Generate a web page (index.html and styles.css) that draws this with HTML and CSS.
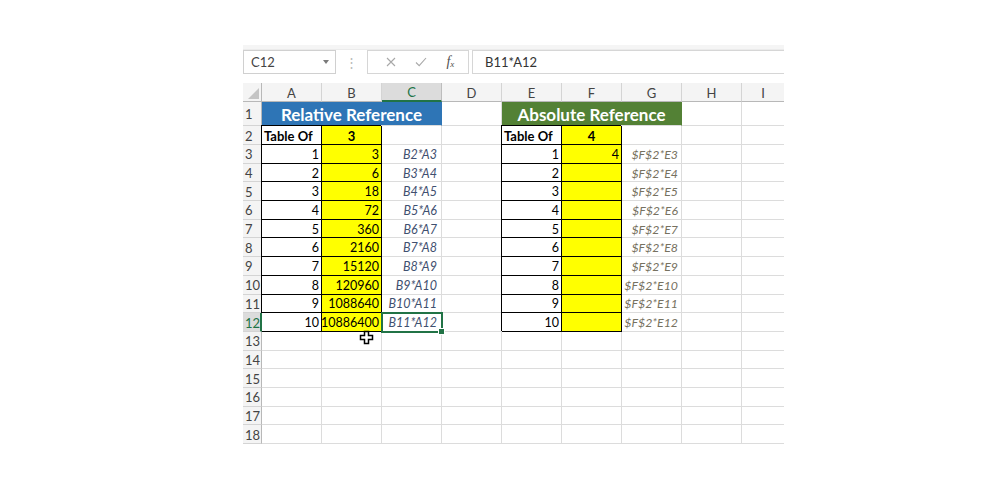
FILE: index.html
```html
<!DOCTYPE html>
<html>
<head>
<meta charset="utf-8">
<link rel="stylesheet" href="styles.css">
</head>
<body>
<div class="app">
  <div class="ribbon-edge"></div>
  <div class="fbar">
    <div class="namebox"><span>C12</span><span class="caret"></span></div>
    <div class="grip">⋮</div>
    <div class="fxbox">
      <svg class="ic" width="10" height="10" viewBox="0 0 10 10"><path d="M1 1L9 9M9 1L1 9" stroke="#a8a8a8" stroke-width="1.1" fill="none"/></svg>
      <svg class="ic" width="12" height="10" viewBox="0 0 12 10"><path d="M1 5.5L4.2 8.6L11 1" stroke="#a8a8a8" stroke-width="1.1" fill="none"/></svg>
      <span class="fx">f<sub>x</sub></span>
    </div>
    <div class="finput">B11*A12</div>
  </div>

  <div class="sheet">
    <!-- header -->
    <div class="corner"><span class="tri"></span></div>
    <div class="ch">A</div><div class="ch">B</div><div class="ch sel">C</div><div class="ch">D</div><div class="ch">E</div><div class="ch">F</div><div class="ch">G</div><div class="ch">H</div><div class="ch last">I</div>

    <!-- row 1 -->
    <div class="rh">1</div>
    <div class="c title blue span3">Relative Reference</div>
    <div class="c"></div>
    <div class="c title green span3">Absolute Reference</div>
    <div class="c"></div><div class="c last"></div>

    <!-- row 2 -->
    <div class="rh">2</div>
    <div class="c bx b">Table Of</div><div class="c bx b y mid">3</div><div class="c"></div><div class="c"></div>
    <div class="c bx b">Table Of</div><div class="c bx b y mid">4</div><div class="c"></div><div class="c"></div><div class="c last"></div>

    <!-- row 3 -->
    <div class="rh">3</div>
    <div class="c bx n">1</div><div class="c bx y n">3</div><div class="c f">B2*A3</div><div class="c"></div>
    <div class="c bx n">1</div><div class="c bx y n">4</div><div class="c g">$F$2*E3</div><div class="c"></div><div class="c last"></div>

    <!-- row 4 -->
    <div class="rh">4</div>
    <div class="c bx n">2</div><div class="c bx y n">6</div><div class="c f">B3*A4</div><div class="c"></div>
    <div class="c bx n">2</div><div class="c bx y n"></div><div class="c g">$F$2*E4</div><div class="c"></div><div class="c last"></div>

    <!-- row 5 -->
    <div class="rh">5</div>
    <div class="c bx n">3</div><div class="c bx y n">18</div><div class="c f">B4*A5</div><div class="c"></div>
    <div class="c bx n">3</div><div class="c bx y n"></div><div class="c g">$F$2*E5</div><div class="c"></div><div class="c last"></div>

    <!-- row 6 -->
    <div class="rh">6</div>
    <div class="c bx n">4</div><div class="c bx y n">72</div><div class="c f">B5*A6</div><div class="c"></div>
    <div class="c bx n">4</div><div class="c bx y n"></div><div class="c g">$F$2*E6</div><div class="c"></div><div class="c last"></div>

    <!-- row 7 -->
    <div class="rh">7</div>
    <div class="c bx n">5</div><div class="c bx y n">360</div><div class="c f">B6*A7</div><div class="c"></div>
    <div class="c bx n">5</div><div class="c bx y n"></div><div class="c g">$F$2*E7</div><div class="c"></div><div class="c last"></div>

    <!-- row 8 -->
    <div class="rh">8</div>
    <div class="c bx n">6</div><div class="c bx y n">2160</div><div class="c f">B7*A8</div><div class="c"></div>
    <div class="c bx n">6</div><div class="c bx y n"></div><div class="c g">$F$2*E8</div><div class="c"></div><div class="c last"></div>

    <!-- row 9 -->
    <div class="rh">9</div>
    <div class="c bx n">7</div><div class="c bx y n">15120</div><div class="c f">B8*A9</div><div class="c"></div>
    <div class="c bx n">7</div><div class="c bx y n"></div><div class="c g">$F$2*E9</div><div class="c"></div><div class="c last"></div>

    <!-- row 10 -->
    <div class="rh">10</div>
    <div class="c bx n">8</div><div class="c bx y n">120960</div><div class="c f">B9*A10</div><div class="c"></div>
    <div class="c bx n">8</div><div class="c bx y n"></div><div class="c g">$F$2*E10</div><div class="c"></div><div class="c last"></div>

    <!-- row 11 -->
    <div class="rh">11</div>
    <div class="c bx n">9</div><div class="c bx y n">1088640</div><div class="c f">B10*A11</div><div class="c"></div>
    <div class="c bx n">9</div><div class="c bx y n"></div><div class="c g">$F$2*E11</div><div class="c"></div><div class="c last"></div>

    <!-- row 12 -->
    <div class="rh sel">12</div>
    <div class="c bx n">10</div><div class="c bx y n">10886400</div><div class="c f active">B11*A12</div><div class="c"></div>
    <div class="c bx n">10</div><div class="c bx y n"></div><div class="c g">$F$2*E12</div><div class="c"></div><div class="c last"></div>

    <!-- rows 13-18 -->
    <div class="rh">13</div><div class="c"></div><div class="c"></div><div class="c"></div><div class="c"></div><div class="c"></div><div class="c"></div><div class="c"></div><div class="c"></div><div class="c last"></div>
    <div class="rh">14</div><div class="c"></div><div class="c"></div><div class="c"></div><div class="c"></div><div class="c"></div><div class="c"></div><div class="c"></div><div class="c"></div><div class="c last"></div>
    <div class="rh">15</div><div class="c"></div><div class="c"></div><div class="c"></div><div class="c"></div><div class="c"></div><div class="c"></div><div class="c"></div><div class="c"></div><div class="c last"></div>
    <div class="rh">16</div><div class="c"></div><div class="c"></div><div class="c"></div><div class="c"></div><div class="c"></div><div class="c"></div><div class="c"></div><div class="c"></div><div class="c last"></div>
    <div class="rh">17</div><div class="c"></div><div class="c"></div><div class="c"></div><div class="c"></div><div class="c"></div><div class="c"></div><div class="c"></div><div class="c"></div><div class="c last"></div>
    <div class="rh">18</div><div class="c"></div><div class="c"></div><div class="c"></div><div class="c"></div><div class="c"></div><div class="c"></div><div class="c"></div><div class="c"></div><div class="c last"></div>

    <svg class="cursor" width="15" height="15" viewBox="0 0 15 15"><path d="M5.5 1.5h4v4h4v4h-4v4h-4v-4h-4v-4h4z" fill="#fff" stroke="#000" stroke-width="1.5" stroke-linejoin="miter"/></svg>
  </div>
</div>
</body>
</html>
```

FILE: styles.css
```css
html, body {
  margin: 0;
  padding: 0;
  background: #fff;
}

.app {
  width: 541px;
  padding: 45px 0 0 243px;
  font-family: "Lato", "Open Sans", sans-serif;
  color: #000;
}

.ribbon-edge {
  height: 4px;
  background: #f5f5f5;
  border-bottom: 1px solid #ebebeb;
}

.fbar {
  display: flex;
  align-items: stretch;
  height: 24px;
  margin-bottom: 9px;
}

.namebox {
  width: 93px;
  box-sizing: border-box;
  border: 1px solid #d0d0d0;
  display: flex;
  align-items: center;
  justify-content: space-between;
  padding: 0 6px 0 7px;
  font-size: 13px;
  color: #444;
}

.caret {
  width: 0;
  height: 0;
  border-left: 3.5px solid transparent;
  border-right: 3.5px solid transparent;
  border-top: 4px solid #7a7a7a;
}

.grip {
  width: 31px;
  display: flex;
  align-items: center;
  justify-content: center;
  color: #b9b9b9;
  font-size: 13px;
}

.fxbox {
  width: 102px;
  box-sizing: border-box;
  border: 1px solid #d6d6d6;
  display: flex;
  align-items: center;
  justify-content: space-around;
  padding: 0 4px 0 8px;
}

.fx {
  font-family: "Liberation Serif", serif;
  font-style: italic;
  font-size: 14px;
  color: #505050;
  line-height: 1;
}

.fx sub {
  font-size: 9px;
  vertical-align: -1px;
}

.finput {
  flex: 1;
  margin-left: 3px;
  box-sizing: border-box;
  border: 1px solid #d6d6d6;
  border-right: none;
  display: flex;
  align-items: center;
  padding-left: 12px;
  font-size: 13px;
  color: #333;
}

.sheet {
  position: relative;
  display: grid;
  grid-template-columns: 19px repeat(8, 60px) 42px;
  grid-template-rows: 19px 24px 19px repeat(16, 18.69px);
  font-size: 13px;
}

.sheet > div {
  box-sizing: border-box;
  border-right: 1px solid #dcdcdc;
  border-bottom: 1px solid #dcdcdc;
  display: flex;
  align-items: center;
  min-width: 0;
  overflow: visible;
  white-space: nowrap;
  padding-top: 1px;
}

.sheet > .last {
  border-right: none;
}

.corner {
  background: #f4f4f4;
  position: relative;
  border-right-color: #b8b8b8 !important;
  border-bottom-color: #b8b8b8 !important;
}

.tri {
  position: absolute;
  right: 2px;
  bottom: 2px;
  width: 0;
  height: 0;
  border-left: 11px solid transparent;
  border-bottom: 11px solid #c4c4c4;
}

.ch {
  background: #f4f4f4;
  justify-content: center;
  color: #444;
  font-size: 13px;
  border-right-color: #d4d4d4 !important;
  border-bottom-color: #b8b8b8 !important;
}

.ch.sel {
  background: #dcdcdc;
  color: #217346;
  border-bottom: 2px solid #217346 !important;
  border-right-color: #bdbdbd !important;
}

.rh {
  background: #f4f4f4;
  color: #444;
  font-size: 13px;
  padding-left: 2px;
  border-right-color: #b8b8b8 !important;
  border-bottom-color: #d4d4d4 !important;
}

.rh.sel {
  background: #dcdcdc;
  color: #217346;
  border-right: 2px solid #217346 !important;
  z-index: 3;
}

.span3 {
  grid-column: span 3;
}

.title {
  justify-content: center;
  color: #fff;
  font-weight: 700;
  font-size: 17px;
}

.blue {
  background: #2e75b6;
  border-right-color: #2e75b6 !important;
}

.green {
  background: #538135;
  border-right-color: #538135 !important;
}

.bx {
  border-right: 1px solid #000 !important;
  border-bottom: 1px solid #000 !important;
  box-shadow: -1px -1px 0 #000;
}

.b {
  font-weight: 700;
  padding-left: 2px;
}

.y {
  background: #ffff00;
}

.mid {
  justify-content: center;
  padding-left: 0;
}

.n {
  justify-content: flex-end;
  padding-right: 2px;
  font-size: 12.5px;
}

.f {
  justify-content: flex-end;
  padding-right: 4px;
  font-style: italic;
  font-size: 12.5px;
  color: #3f5070;
}

.g {
  justify-content: flex-end;
  padding-right: 3px;
  font-style: italic;
  font-size: 12.3px;
  color: #767160;
}

.active {
  position: relative;
  z-index: 2;
  outline: 2px solid #217346;
  outline-offset: -1px;
}

.active::after {
  content: "";
  position: absolute;
  right: -4px;
  bottom: -4px;
  width: 5px;
  height: 5px;
  background: #217346;
  border: 1px solid #fff;
}

.cursor {
  position: absolute;
  left: 116px;
  top: 247px;
  z-index: 5;
}
```
